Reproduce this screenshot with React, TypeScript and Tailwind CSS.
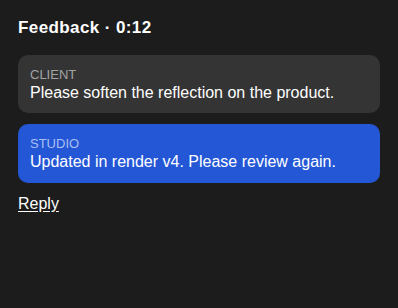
export default function App() {
  const messages = [
    { from: 'CLIENT', text: 'Please soften the reflection on the product.', studio: false },
    { from: 'STUDIO', text: 'Updated in render v4. Please review again.', studio: true },
  ];

  return (
    <div className="min-h-[308px] w-[398px] bg-[#1c1c1c] px-[18px] pt-[17px] text-white font-['Liberation_Sans',Arial,sans-serif]">
      <h2 className="text-[17px] font-bold leading-[22px] tracking-[0.4px]">Feedback · 0:12</h2>
      <div className="mt-[16px] flex flex-col gap-[11px]">
        {messages.map((m) => (
          <div
            key={m.from}
            className={
              m.studio
                ? 'rounded-[10px] bg-[#2457d6] px-[12px] pt-[11px] pb-[12px]'
                : 'rounded-[10px] bg-[#343434] px-[12px] pt-[11px] pb-[11px]'
            }
          >
            <div className={m.studio ? 'text-[13px] leading-[18px] text-[#a9bff2]' : 'text-[13px] leading-[18px] text-[#a3a3a3]'}>
              {m.from}
            </div>
            <div className="text-[16px] leading-[18px]">{m.text}</div>
          </div>
        ))}
      </div>
      <button className="mt-[11px] text-[16px] leading-[20px] underline underline-offset-2">Reply</button>
    </div>
  );
}
